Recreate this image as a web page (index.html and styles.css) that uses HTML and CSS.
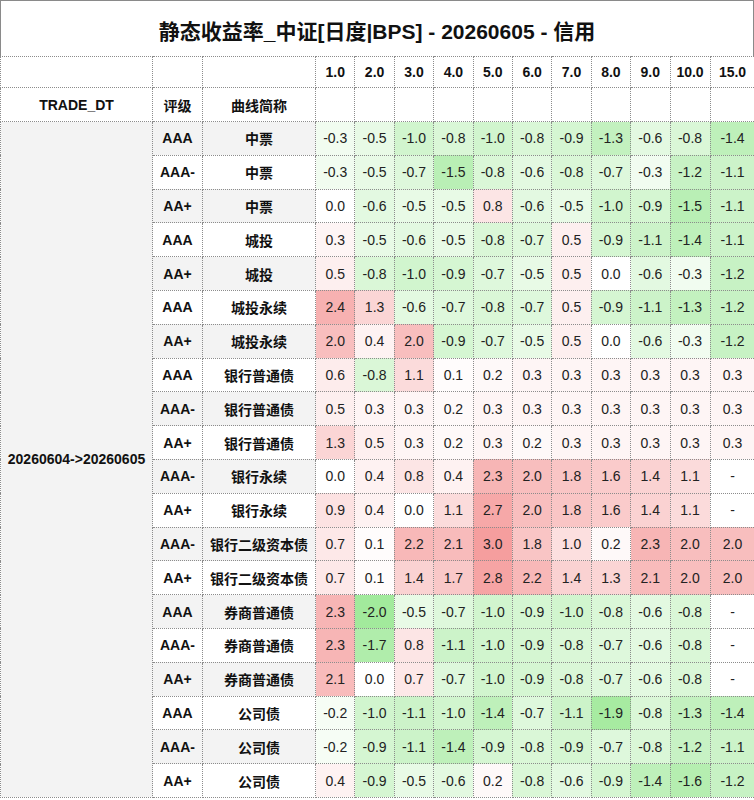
FILE: index.html
```html
<!DOCTYPE html>
<html lang="zh">
<head>
<meta charset="utf-8">
<link rel="stylesheet" href="styles.css">
</head>
<body>
<div class="sheet">
  <div class="title">静态收益率_中证[日度|BPS] - 20260605 - 信用</div>
  <table class="grid">
    <colgroup>
      <col class="c-dt"><col class="c-rt"><col class="c-nm">
      <col class="c-v"><col class="c-v"><col class="c-v"><col class="c-v"><col class="c-v">
      <col class="c-v"><col class="c-v"><col class="c-v"><col class="c-v"><col class="c-v10"><col class="c-v15">
    </colgroup>
    <thead>
      <tr class="h1">
        <th></th><th></th><th></th>
        <th>1.0</th><th>2.0</th><th>3.0</th><th>4.0</th><th>5.0</th><th>6.0</th>
        <th>7.0</th><th>8.0</th><th>9.0</th><th>10.0</th><th>15.0</th>
      </tr>
      <tr class="h2">
        <th>TRADE_DT</th><th>评级</th><th>曲线简称</th>
        <th></th><th></th><th></th><th></th><th></th><th></th>
        <th></th><th></th><th></th><th></th><th></th>
      </tr>
    </thead>
    <tbody id="body"></tbody>
  </table>
</div>
<script src="script.js"></script>
</body>
</html>
```

FILE: styles.css
```css
html, body {
  margin: 0;
  padding: 0;
  background: #fff;
}
body {
  font-family: "Liberation Sans", "Noto Sans CJK SC", sans-serif;
  color: #1a1a1a;
}
.sheet {
  width: 754px;
}
.title {
  box-sizing: border-box;
  height: 56px;
  border: 1px solid #8a8a8a;
  border-bottom: none;
  display: flex;
  align-items: center;
  justify-content: center;
  font-size: 21px;
  font-weight: bold;
  color: #111;
  padding-top: 2px;
}
.grid {
  width: 754px;
  table-layout: fixed;
  border-collapse: collapse;
  font-size: 14px;
}
.c-dt { width: 152px; }
.c-rt { width: 50px; }
.c-nm { width: 113px; }
.c-v { width: 39.4px; }
.c-v10 { width: 40px; }
.c-v15 { width: 45px; }
.grid th, .grid td {
  border: 1px dotted #8c8c8c;
  padding: 0;
  text-align: center;
  white-space: nowrap;
}
.grid th {
  font-weight: bold;
  background: #fff;
  color: #111;
}
.h1 th { height: 30px; }
.h2 th { height: 33px; }
.grid td { height: 32.8px; }
.dt {
  background: #f3f3f3;
  font-weight: bold;
  color: #111;
}
.lab {
  font-weight: bold;
  color: #111;
}
.odd .lab { background: #f3f3f3; }
.even .lab { background: #fff; }
.val {
  color: #222;
}
```

FILE: script.js
```js
var rows = [
  ["AAA","中票",[-0.3,-0.5,-1.0,-0.8,-1.0,-0.8,-0.9,-1.3,-0.6,-0.8,-1.4]],
  ["AAA-","中票",[-0.3,-0.5,-0.7,-1.5,-0.8,-0.6,-0.8,-0.7,-0.3,-1.2,-1.1]],
  ["AA+","中票",[0.0,-0.6,-0.5,-0.5,0.8,-0.6,-0.5,-1.0,-0.9,-1.5,-1.1]],
  ["AAA","城投",[0.3,-0.5,-0.6,-0.5,-0.8,-0.7,0.5,-0.9,-1.1,-1.4,-1.1]],
  ["AA+","城投",[0.5,-0.8,-1.0,-0.9,-0.7,-0.5,0.5,0.0,-0.6,-0.3,-1.2]],
  ["AAA","城投永续",[2.4,1.3,-0.6,-0.7,-0.8,-0.7,0.5,-0.9,-1.1,-1.3,-1.2]],
  ["AA+","城投永续",[2.0,0.4,2.0,-0.9,-0.7,-0.5,0.5,0.0,-0.6,-0.3,-1.2]],
  ["AAA","银行普通债",[0.6,-0.8,1.1,0.1,0.2,0.3,0.3,0.3,0.3,0.3,0.3]],
  ["AAA-","银行普通债",[0.5,0.3,0.3,0.2,0.3,0.3,0.3,0.3,0.3,0.3,0.3]],
  ["AA+","银行普通债",[1.3,0.5,0.3,0.2,0.3,0.2,0.3,0.3,0.3,0.3,0.3]],
  ["AAA-","银行永续",[0.0,0.4,0.8,0.4,2.3,2.0,1.8,1.6,1.4,1.1,null]],
  ["AA+","银行永续",[0.9,0.4,0.0,1.1,2.7,2.0,1.8,1.6,1.4,1.1,null]],
  ["AAA-","银行二级资本债",[0.7,0.1,2.2,2.1,3.0,1.8,1.0,0.2,2.3,2.0,2.0]],
  ["AA+","银行二级资本债",[0.7,0.1,1.4,1.7,2.8,2.2,1.4,1.3,2.1,2.0,2.0]],
  ["AAA","券商普通债",[2.3,-2.0,-0.5,-0.7,-1.0,-0.9,-1.0,-0.8,-0.6,-0.8,null]],
  ["AAA-","券商普通债",[2.3,-1.7,0.8,-1.1,-1.0,-0.9,-0.8,-0.7,-0.6,-0.8,null]],
  ["AA+","券商普通债",[2.1,0.0,0.7,-0.7,-1.0,-0.9,-0.8,-0.7,-0.6,-0.8,null]],
  ["AAA","公司债",[-0.2,-1.0,-1.1,-1.0,-1.4,-0.7,-1.1,-1.9,-0.8,-1.3,-1.4]],
  ["AAA-","公司债",[-0.2,-0.9,-1.1,-1.4,-0.9,-0.8,-0.9,-0.7,-0.8,-1.2,-1.1]],
  ["AA+","公司债",[0.4,-0.9,-0.5,-0.6,0.2,-0.8,-0.6,-0.9,-1.4,-1.6,-1.2]]
];

function mix(base, t) {
  var r = Math.round(255 + (base[0] - 255) * t);
  var g = Math.round(255 + (base[1] - 255) * t);
  var b = Math.round(255 + (base[2] - 255) * t);
  return "rgb(" + r + "," + g + "," + b + ")";
}

function bg(v) {
  if (v === null || v === 0) return "#fff";
  if (v > 0) return mix([245, 158, 158], Math.min(v / 3, 1));
  return mix([162, 234, 156], Math.min(-v / 2, 1));
}

var body = document.getElementById("body");
rows.forEach(function (row, i) {
  var tr = document.createElement("tr");
  tr.className = i % 2 === 0 ? "odd" : "even";
  if (i === 0) {
    var dt = document.createElement("td");
    dt.className = "dt";
    dt.rowSpan = rows.length;
    dt.textContent = "20260604->20260605";
    tr.appendChild(dt);
  }
  var rt = document.createElement("td");
  rt.className = "lab";
  rt.textContent = row[0];
  tr.appendChild(rt);
  var nm = document.createElement("td");
  nm.className = "lab";
  nm.textContent = row[1];
  tr.appendChild(nm);
  row[2].forEach(function (v) {
    var td = document.createElement("td");
    td.className = "val";
    td.textContent = v === null ? "-" : v.toFixed(1);
    td.style.background = bg(v);
    tr.appendChild(td);
  });
  body.appendChild(tr);
});
```
